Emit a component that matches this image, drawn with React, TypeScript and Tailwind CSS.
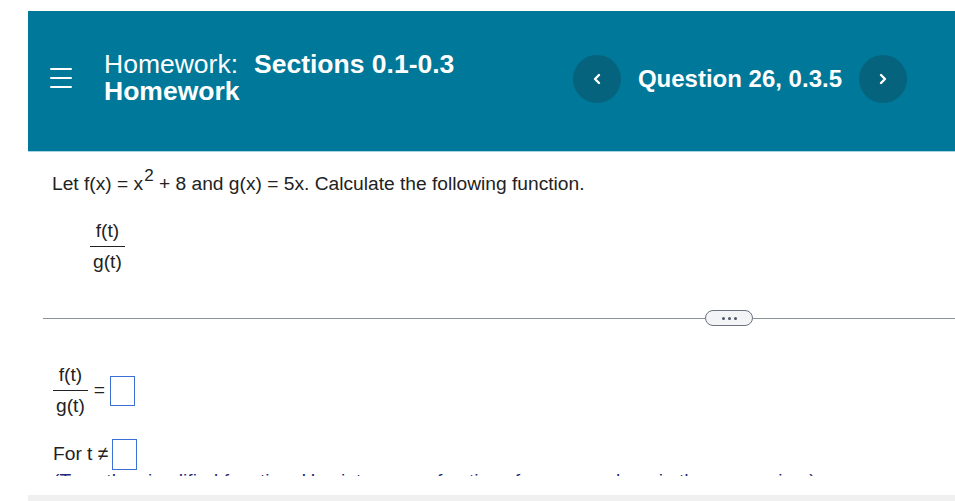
const FONT = "font-['Liberation_Sans',Arial,sans-serif]";

function Chevron({ dir }: { dir: "left" | "right" }) {
  return (
    <svg width="10" height="12" viewBox="0 0 10 12" fill="none">
      <path
        d={dir === "left" ? "M7 2 L3 6 L7 10" : "M3 2 L7 6 L3 10"}
        stroke="white"
        strokeWidth="2.4"
        strokeLinecap="round"
        strokeLinejoin="round"
      />
    </svg>
  );
}

function Fraction({ top, bottom }: { top: string; bottom: string }) {
  return (
    <div className="flex flex-col items-center">
      <span className="px-[3px] pb-[4px] leading-[22px]">{top}</span>
      <span className="h-px w-full bg-[#222]" />
      <span className="px-[3px] pt-[4px] leading-[22px]">{bottom}</span>
    </div>
  );
}

function AnswerBox({ h }: { h: string }) {
  return <div className={`w-[25px] border border-[#3b6fd4] bg-white ${h}`} />;
}

export default function App() {
  return (
    <div className={`w-[955px] h-[501px] bg-white overflow-hidden text-[#222] ${FONT}`}>
      <div className="h-[11px]" />

      <div className="ml-[28px]">
        {/* HEADER */}
        <header className="h-[141px] bg-[#007899] border-b border-[#a8d3e2] flex items-center pb-[4px] pl-[22px] pr-[48px] text-white">
          <div className="flex flex-col gap-[7px] w-[22px] mb-[2px]">
            <span className="h-[2px] bg-white rounded" />
            <span className="h-[2px] bg-white rounded" />
            <span className="h-[2px] bg-white rounded" />
          </div>

          <div className="ml-[32px] mb-[3px] text-[26.5px] leading-[27px] flex flex-col">
            <span>
              Homework:<span className="ml-[16px] font-bold">Sections 0.1-0.3</span>
            </span>
            <span className="font-bold">Homework</span>
          </div>

          <div className="flex-1" />

          <div className="flex items-center">
            <button className="w-[48px] h-[48px] rounded-full bg-[#06637e] flex items-center justify-center">
              <Chevron dir="left" />
            </button>
            <span className="mx-[17px] text-[24px] font-bold">Question 26, 0.3.5</span>
            <button className="w-[48px] h-[48px] rounded-full bg-[#06637e] flex items-center justify-center">
              <Chevron dir="right" />
            </button>
          </div>
        </header>

        {/* QUESTION + ANSWER */}
        <div className="h-[324px] overflow-hidden text-[19.2px]">
          <div className="pl-[24px] pt-[20px]">
            <p className="leading-[24px]">
              Let f(x) = x<sup className="text-[17px] top-[-9px] ml-px">2</sup> + 8 and g(x) = 5x. Calculate the following function.
            </p>
            <div className="mt-[24px] ml-[38px] flex">
              <Fraction top="f(t)" bottom="g(t)" />
            </div>
          </div>

          <div className="mt-[37px] ml-[15px] h-[16px] flex items-center">
            <span className="w-[662px] h-px bg-[#8d9198]" />
            <button className="w-[48px] h-[16px] rounded-full border border-[#6b7280] bg-[#f3f4f6] flex items-center justify-center gap-[3px]">
              <span className="w-[3px] h-[3px] rounded-full bg-[#4b5563]" />
              <span className="w-[3px] h-[3px] rounded-full bg-[#4b5563]" />
              <span className="w-[3px] h-[3px] rounded-full bg-[#4b5563]" />
            </button>
            <span className="flex-1 h-px bg-[#8d9198]" />
          </div>

          <div className="pl-[25px]">
            <div className="mt-[38px] flex items-center">
              <Fraction top="f(t)" bottom="g(t)" />
              <span className="ml-[6px]">=</span>
              <div className="ml-[5px]">
                <AnswerBox h="h-[30px]" />
              </div>
            </div>

            <div className="mt-[22px] flex items-center">
              <span>For t ≠</span>
              <div className="ml-[4px]">
                <AnswerBox h="h-[31px]" />
              </div>
            </div>

            <p className="leading-[22px] text-[#1f2a7a] whitespace-nowrap">
              (Type the simplified function. Use integers or fractions for any numbers in the expression.)
            </p>
          </div>
        </div>

        <div className="h-[19px]" />
        <div className="h-[10px] bg-[#f0f0f0]" />
      </div>
    </div>
  );
}
